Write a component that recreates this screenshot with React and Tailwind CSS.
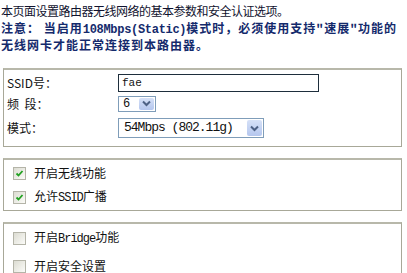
import React from "react";

const cjk = { fontFamily: '"Noto Sans CJK SC", "DejaVu Sans", sans-serif' };
const mono = { fontFamily: '"Liberation Mono", "Noto Sans CJK SC", monospace' };

function Arrow({ h }) {
  return (
    <div className={`flex items-center justify-center w-[15px] ${h} bg-gradient-to-b from-[#d6e1f7] to-[#b4c6ee] rounded-[2px]`}>
      <svg width="9" height="7" viewBox="0 0 9 7">
        <path d="M1 1.5 L4.5 5 L8 1.5" fill="none" stroke="#4d6185" strokeWidth="2" />
      </svg>
    </div>
  );
}

function Check({ checked }) {
  return (
    <div className="w-[13px] h-[13px] shrink-0 border border-[#b4b4a8] bg-gradient-to-br from-[#dcdcd2] to-[#fbfbf8] flex items-center justify-center">
      {checked && (
        <svg width="9" height="9" viewBox="0 0 9 9">
          <path d="M1.5 4.5 L3.5 6.5 L7.5 2" fill="none" stroke="#21a121" strokeWidth="1.8" />
        </svg>
      )}
    </div>
  );
}

function Row({ checked, children }) {
  return (
    <div className="flex items-center h-[16px] gap-[8px] pl-[9px] leading-[16px]">
      <Check checked={checked} />
      <span>{children}</span>
    </div>
  );
}

export default function App() {
  return (
    <div className="w-[407px] h-[273px] bg-white overflow-hidden" style={cjk}>
      <div className="pt-[2px] pl-[1px] text-[12px] leading-[17px]">
        <div className="h-[17px] text-[#10122e] tracking-[-0.5px] whitespace-nowrap">本页面设置路由器无线网络的基本参数和安全认证选项。</div>
        <div className="h-[17px] overflow-hidden text-[#142a6c] font-bold tracking-[1px] whitespace-nowrap">
          注意： 当启用<span style={mono} className="tracking-[-0.3px] leading-[12px]">108Mbps(Static)</span>模式时，必须使用支持"速展"功能的
        </div>
        <div className="h-[17px] text-[#142a6c] font-bold tracking-[1px] whitespace-nowrap">无线网卡才能正常连接到本路由器。</div>
      </div>

      <div className="ml-[3px] mt-[15px] w-[399px] h-[79px] border border-[#a8a898] border-t-2 border-t-[#b8b8aa] flex flex-col text-[12px] text-[#111]">
        <div className="flex items-center h-[23px] pt-[3px]">
          <div className="w-[114px] pl-[3px]">SSID号：</div>
          <div style={mono} className="w-[201px] h-[18px] border border-[#1e2e3c] flex items-center pl-[3px] text-[11px]">fae</div>
        </div>
        <div className="flex items-center h-[21px]">
          <div className="w-[114px] pl-[3px]">频&nbsp;&nbsp;段：</div>
          <div className="w-[38px] h-[16px] border border-[#7f9db9] flex items-center justify-between pl-[4px] pr-[1px] text-[12px]">
            <span style={mono}>6</span>
            <Arrow h="h-[12px]" />
          </div>
        </div>
        <div className="flex items-center h-[30px] pb-[2px]">
          <div className="w-[114px] pl-[3px]">模式：</div>
          <div className="w-[146px] h-[20px] border border-[#7f9db9] flex items-center justify-between pl-[5px] pr-[1px] text-[13px]">
            <span style={mono} className="tracking-[-1px]">54Mbps (802.11g)</span>
            <Arrow h="h-[16px]" />
          </div>
        </div>
      </div>

      <div className="ml-[3px] mt-[11px] w-[399px] h-[53px] border border-[#a8a898] border-t-2 border-t-[#b8b8aa] flex flex-col justify-center gap-[8px] text-[12px] text-[#111]">
        <Row checked>开启无线功能</Row>
        <Row checked>允许<span style={mono} className="tracking-[-1px]">SSID</span>广播</Row>
      </div>

      <div className="ml-[3px] mt-[11px] w-[399px] h-[60px] border border-[#a8a898] border-t-2 border-t-[#b8b8aa] border-b-0 flex flex-col gap-[12px] pt-[6px] text-[12px] text-[#111]">
        <Row>开启<span style={mono} className="tracking-[-1px]">Bridge</span>功能</Row>
        <Row>开启安全设置</Row>
      </div>
    </div>
  );
}
